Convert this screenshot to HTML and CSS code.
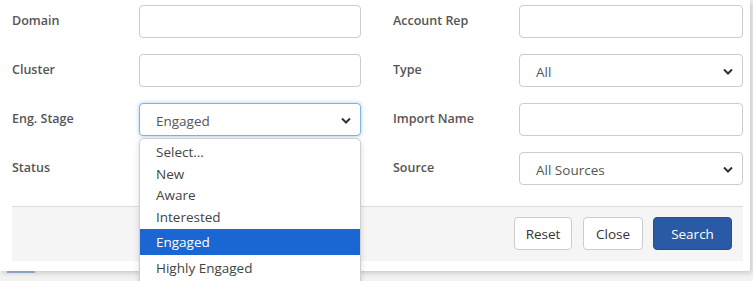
FILE: index.html
```html
<!DOCTYPE html>
<html lang="en">
<head>
    <meta charset="UTF-8" />
    <title>Search Filters</title>
    <link rel="stylesheet" href="styles.css">
</head>
<body>
    <div class="panel">
        <div class="form-grid">
            <label class="form-label">Domain</label>
            <input class="form-control" type="text">
            <label class="form-label right">Account Rep</label>
            <input class="form-control" type="text">

            <label class="form-label">Cluster</label>
            <input class="form-control" type="text">
            <label class="form-label right">Type</label>
            <div class="form-control select"><span>All</span><svg class="caret" viewBox="0 0 10 6"><path d="M1 1l4 4 4-4" /></svg></div>

            <label class="form-label">Eng. Stage</label>
            <div class="select-wrap">
                <div class="form-control select focused"><span>Engaged</span><svg class="caret" viewBox="0 0 10 6"><path d="M1 1l4 4 4-4" /></svg></div>
                <ul class="dropdown">
                    <li>Select...</li>
                    <li>New</li>
                    <li>Aware</li>
                    <li>Interested</li>
                    <li class="big active">Engaged</li>
                    <li class="big">Highly Engaged</li>
                </ul>
            </div>
            <label class="form-label right">Import Name</label>
            <input class="form-control" type="text">

            <label class="form-label">Status</label>
            <div class="form-control select"><span></span></div>
            <label class="form-label right">Source</label>
            <div class="form-control select"><span>All Sources</span><svg class="caret" viewBox="0 0 10 6"><path d="M1 1l4 4 4-4" /></svg></div>
        </div>

        <div class="panel-footer">
            <button class="btn btn-reset">Reset</button>
            <button class="btn btn-close">Close</button>
            <button class="btn btn-primary">Search</button>
        </div>
    </div>
    <div class="below">
        <span class="tab-mark"></span>
    </div>
</body>
</html>
```

FILE: styles.css
```css
body {
    margin: 0;
    padding: 0;
    font-family: 'Open Sans', 'Noto Sans', sans-serif;
    background: #f3f3f3;
    overflow: hidden;
}

.panel {
    width: 750px;
    background: #fff;
    padding: 5px 0 10px 12px;
    box-sizing: border-box;
    box-shadow: 2px 2px 5px rgba(0, 0, 0, 0.18);
    position: relative;
    z-index: 1;
}

.form-grid {
    display: grid;
    grid-template-columns: 127px 222px 158px 224px;
    grid-auto-rows: 33px;
    row-gap: 16px;
    align-items: center;
}

.form-label {
    font-size: 12.5px;
    font-weight: 600;
    color: #555;
    margin-bottom: 3px;
}

    .form-label.right {
        padding-left: 32px;
    }

.form-control {
    height: 33px;
    box-sizing: border-box;
    border: 1px solid #ccc;
    border-radius: 4px;
    background: #fff;
    font-family: inherit;
    font-size: 13.5px;
    color: #555;
    padding: 0 16px;
    margin: 0;
    outline: none;
}

.select {
    display: flex;
    align-items: center;
    justify-content: space-between;
    padding-right: 9px;
    padding-top: 2px;
}

    .select.focused {
        border-color: #7fb2e5;
        box-shadow: 0 0 4px rgba(102, 175, 233, 0.6);
    }

.caret {
    width: 10px;
    height: 7px;
    fill: none;
    stroke: #333;
    stroke-width: 2;
}

.select-wrap {
    position: relative;
    height: 33px;
}

.dropdown {
    position: absolute;
    top: 35px;
    left: 0;
    width: 222px;
    margin: 0;
    padding: 3px 0 0;
    list-style: none;
    background: #fff;
    border: 1px solid #cfcfcf;
    border-radius: 5px 5px 0 0;
    box-sizing: border-box;
    box-shadow: 0 2px 6px rgba(0, 0, 0, 0.15);
    z-index: 5;
    font-size: 13.5px;
    color: #444;
}

    .dropdown li {
        height: 21.7px;
        line-height: 21.7px;
        padding-left: 16px;
    }

        .dropdown li.big {
            height: 26px;
            line-height: 26px;
        }

        .dropdown li.active {
            background: #1a67d3;
            color: #fff;
        }

.panel-footer {
    margin: 21px 7px 0 0;
    border-top: 1px solid #ddd;
    background: #f5f5f5;
    padding: 10px 11px 11px;
    display: flex;
    justify-content: flex-end;
    gap: 10px;
}

.btn {
    height: 33px;
    padding: 0;
    font-family: inherit;
    font-size: 13.5px;
    color: #333;
    background: #fff;
    border: 1px solid #ccc;
    border-radius: 4px;
}

.btn-reset {
    width: 58px;
    margin-right: 1px;
}

.btn-close {
    width: 60px;
}

.btn-primary {
    width: 79px;
    background: #2a5aa6;
    border-color: #24508f;
    color: #fff;
}

.below {
    height: 20px;
    padding-left: 7px;
}

.tab-mark {
    display: block;
    width: 28px;
    height: 2px;
    background: #9fb8d8;
}
```
